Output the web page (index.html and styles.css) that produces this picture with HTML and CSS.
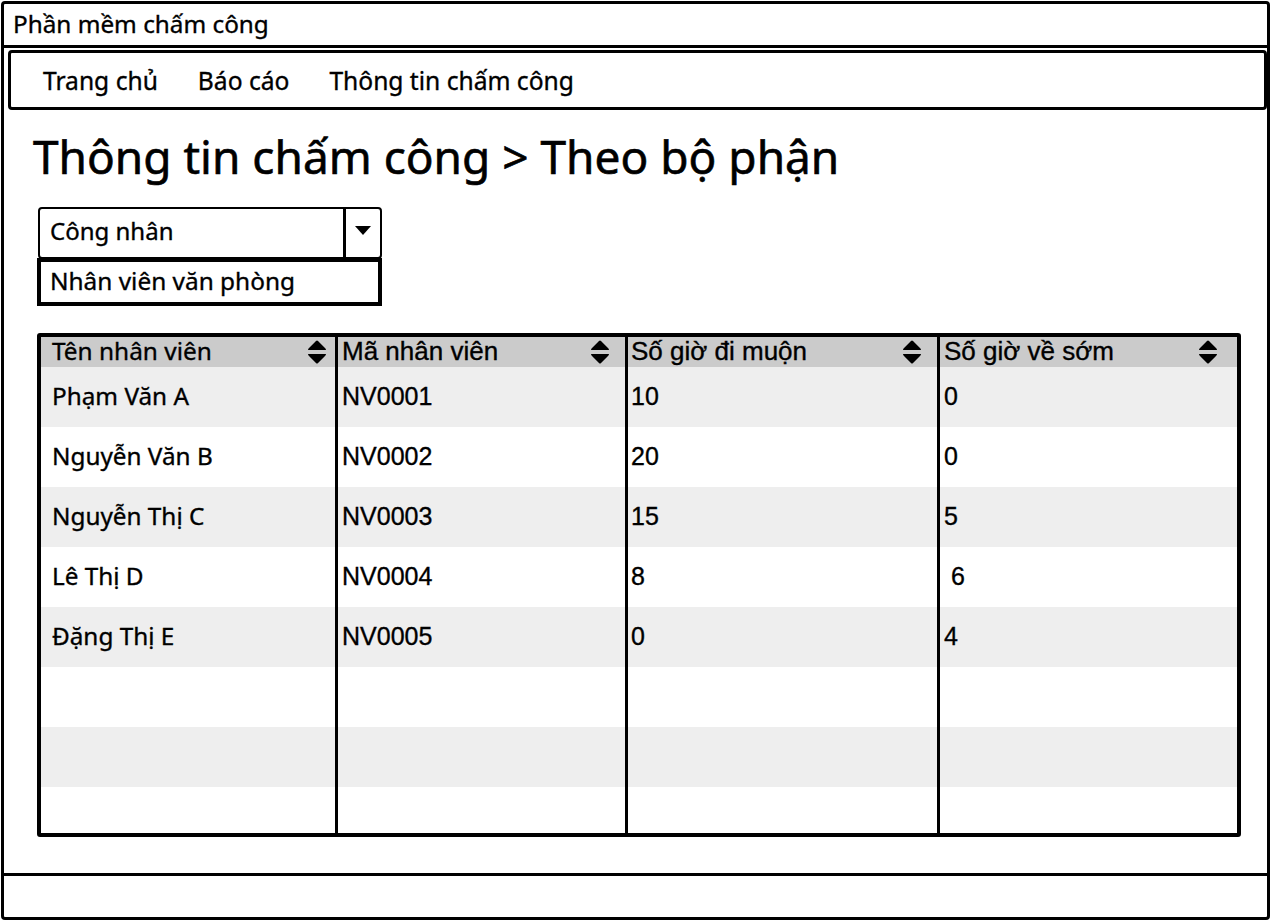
FILE: index.html
```html
<!DOCTYPE html>
<html lang="vi">
<head>
<meta charset="utf-8">
<title>Phần mềm chấm công</title>
<link rel="stylesheet" href="styles.css">
</head>
<body>
<div class="window">
  <div class="titlebar">Phần mềm chấm công</div>
  <nav class="nav">
    <span class="nav-item">Trang chủ</span>
    <span class="nav-item">Báo cáo</span>
    <span class="nav-item">Thông tin chấm công</span>
  </nav>
  <main class="main">
    <h1 class="heading">Thông tin chấm công &gt; Theo bộ phận</h1>
    <div class="combo">
      <div class="combo-value">Công nhân</div>
      <div class="combo-btn">
        <svg width="16" height="9" viewBox="0 0 16 9"><path d="M0 0 L16 0 L8 9 Z" fill="#000"/></svg>
      </div>
    </div>
    <div class="combo-list">Nhân viên văn phòng</div>

    <div class="table">
      <div class="col c1">
        <div class="th"><span>Tên nhân viên</span><svg class="sort" width="20" height="24" viewBox="0 0 20 24"><path d="M1 10 Q1 9 2 8 L9 1 Q10 0 11 1 L18 8 Q19 9 19 10 Z M1 14 Q1 15 2 16 L9 23 Q10 24 11 23 L18 16 Q19 15 19 14 Z" fill="#000"/></svg></div>
        <div class="td odd">Phạm Văn A</div>
        <div class="td">Nguyễn Văn B</div>
        <div class="td odd">Nguyễn Thị C</div>
        <div class="td">Lê Thị D</div>
        <div class="td odd">Đặng Thị E</div>
        <div class="td"></div>
        <div class="td odd"></div>
        <div class="td last"></div>
      </div>
      <div class="col c2">
        <div class="th"><span>Mã nhân viên</span><svg class="sort" width="20" height="24" viewBox="0 0 20 24"><path d="M1 10 Q1 9 2 8 L9 1 Q10 0 11 1 L18 8 Q19 9 19 10 Z M1 14 Q1 15 2 16 L9 23 Q10 24 11 23 L18 16 Q19 15 19 14 Z" fill="#000"/></svg></div>
        <div class="td odd">NV0001</div>
        <div class="td">NV0002</div>
        <div class="td odd">NV0003</div>
        <div class="td">NV0004</div>
        <div class="td odd">NV0005</div>
        <div class="td"></div>
        <div class="td odd"></div>
        <div class="td last"></div>
      </div>
      <div class="col c3">
        <div class="th"><span>Số giờ đi muộn</span><svg class="sort" width="20" height="24" viewBox="0 0 20 24"><path d="M1 10 Q1 9 2 8 L9 1 Q10 0 11 1 L18 8 Q19 9 19 10 Z M1 14 Q1 15 2 16 L9 23 Q10 24 11 23 L18 16 Q19 15 19 14 Z" fill="#000"/></svg></div>
        <div class="td odd">10</div>
        <div class="td">20</div>
        <div class="td odd">15</div>
        <div class="td">8</div>
        <div class="td odd">0</div>
        <div class="td"></div>
        <div class="td odd"></div>
        <div class="td last"></div>
      </div>
      <div class="col c4">
        <div class="th"><span>Số giờ về sớm</span><svg class="sort" width="20" height="24" viewBox="0 0 20 24"><path d="M1 10 Q1 9 2 8 L9 1 Q10 0 11 1 L18 8 Q19 9 19 10 Z M1 14 Q1 15 2 16 L9 23 Q10 24 11 23 L18 16 Q19 15 19 14 Z" fill="#000"/></svg></div>
        <div class="td odd">0</div>
        <div class="td">0</div>
        <div class="td odd">5</div>
        <div class="td">&nbsp;6</div>
        <div class="td odd">4</div>
        <div class="td"></div>
        <div class="td odd"></div>
        <div class="td last"></div>
      </div>
    </div>
  </main>
  <footer class="footer"></footer>
</div>
</body>
</html>
```

FILE: styles.css
```css
* { box-sizing: border-box; }

html, body {
  margin: 0;
  padding: 0;
  background: #fff;
}

body {
  font-family: "Noto Sans", "Liberation Sans", sans-serif;
  color: #000;
  width: 1272px;
  height: 922px;
  overflow: hidden;
  -webkit-text-stroke: 0.35px #000;
}

.window {
  margin: 1px 2px 0 1px;
  height: 919px;
  border: 3px solid #000;
  border-radius: 4px;
  display: flex;
  flex-direction: column;
}

.titlebar {
  height: 44px;
  border-bottom: 3px solid #000;
  padding-left: 9px;
  font-size: 24.3px;
  line-height: 40px;
  flex: none;
}

.nav {
  flex: none;
  margin: 2px 0 0 4px;
  height: 60px;
  border: 3px solid #000;
  border-radius: 4px;
  display: flex;
  align-items: center;
  gap: 40px;
  padding-left: 32px;
  font-size: 24.6px;
}

.main {
  flex: 1;
  padding-left: 34px;
  display: flex;
  flex-direction: column;
  align-items: flex-start;
}

.heading {
  margin: 18px 0 0 -5px;
  font-size: 46px;
  font-weight: normal;
  line-height: 56px;
  height: 56px;
  -webkit-text-stroke: 0.6px #000;
}

.combo {
  margin-top: 23px;
  width: 344px;
  height: 52px;
  border: 2px solid #000;
  border-radius: 4px;
  display: flex;
  font-size: 24px;
}

.combo-value {
  flex: 1;
  padding-left: 10px;
  line-height: 44px;
  border-right: 3px solid #000;
}

.combo-btn {
  width: 34px;
  display: flex;
  align-items: center;
  justify-content: center;
  padding-bottom: 6px;
}

.combo-list {
  margin-left: -1px;
  width: 345px;
  height: 48px;
  border: 4px solid #000;
  margin-top: -1px;
  padding-left: 9px;
  font-size: 24.4px;
  line-height: 38px;
}

.table {
  margin: 27px 0 0 -1px;
  width: 1204px;
  height: 504px;
  border: 4px solid #000;
  border-radius: 3px;
  display: grid;
  grid-template-columns: 294px 290px 312px 300px;
  overflow: hidden;
}

.col {
  display: flex;
  flex-direction: column;
}

.c2, .c3, .c4 {
  border-left: 3px solid #000;
  font-family: "Liberation Sans", Arial, sans-serif;
}

.th {
  height: 30px;
  background: #cbcbcb;
  display: flex;
  align-items: center;
  justify-content: space-between;
  font-size: 24.4px;
  line-height: 26px;
  padding-bottom: 2px;
}

.c2 .th, .c3 .th, .c4 .th {
  font-size: 26px;
}

.td {
  height: 60px;
  background: #fff;
  font-size: 24.3px;
  line-height: 58px;
  white-space: pre;
}

.c2 .td, .c3 .td, .c4 .td { font-size: 25px; }

.td.odd { background: #eeeeee; }
.td.last { height: 46px; }

.c1 .th, .c1 .td { padding-left: 11px; }
.c2 .th, .c2 .td { padding-left: 4px; }
.c3 .th, .c3 .td { padding-left: 3px; }
.c4 .th, .c4 .td { padding-left: 4px; }

.c1 .th { padding-right: 8px; }
.c2 .th { padding-right: 15px; }
.c3 .th { padding-right: 15px; }
.c4 .th { padding-right: 19px; }

.sort { flex: none; margin-top: 2px; }

.footer {
  flex: none;
  height: 44px;
  border-top: 3px solid #000;
}
```
